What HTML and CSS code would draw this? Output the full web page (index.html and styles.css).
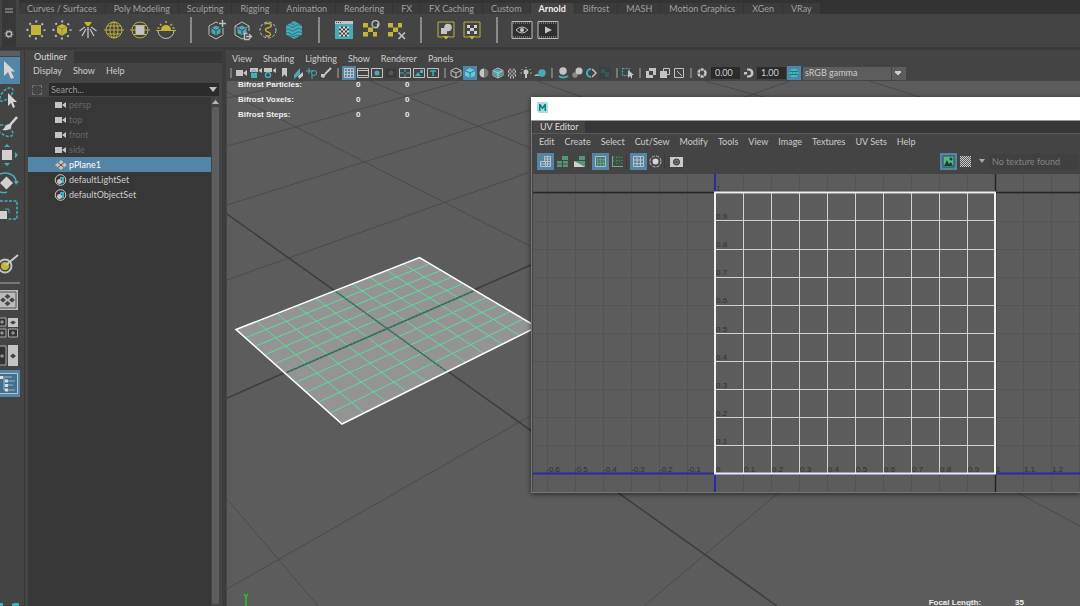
FILE: index.html
```html
<!DOCTYPE html>
<html lang="en">
<head>
<meta charset="utf-8">
<title>Modeling workspace</title>
<link rel="stylesheet" href="styles.css">
</head>
<body>
<div class="app">
  <header class="shelf">
    <div class="shelf-side">
      <button class="plain" aria-label="Shelf tabs"><svg width="8" height="6"><path d="M0 1h8M0 4h8" stroke="#aaa"/></svg></button>
      <button class="plain" aria-label="Shelf options"><svg width="10" height="10"><circle cx="5" cy="5" r="2.6" fill="none" stroke="#b5b5b5" stroke-width="1.5"/><circle cx="5" cy="5" r="4" fill="none" stroke="#b5b5b5" stroke-dasharray="1.2 1.9"/></svg></button>
    </div>
    <div class="shelf-main">
      <div class="shelf-tabs" role="tablist">
        <button role="tab">Curves / Surfaces</button><button role="tab">Poly Modeling</button><button role="tab">Sculpting</button><button role="tab">Rigging</button><button role="tab">Animation</button><button role="tab">Rendering</button><button role="tab">FX</button><button role="tab">FX Caching</button><button role="tab">Custom</button><button role="tab" class="active" aria-selected="true">Arnold</button><button role="tab">Bifrost</button><button role="tab">MASH</button><button role="tab">Motion Graphics</button><button role="tab">XGen</button><button role="tab">VRay</button>
      </div>
      <div class="shelf-tools">
        <button aria-label="Area light"><svg viewBox="0 0 20 20"><circle cx="10" cy="10" r="8.5" class="g dots"/><path d="M5 5h10v10H5z" class="fy"/></svg></button>
        <button aria-label="Mesh light"><svg viewBox="0 0 20 20"><circle cx="10" cy="10" r="8.5" class="g dots"/><path d="M10 4l5 2.500v6L10 16l-5-3.500v-6z" class="fy"/><path d="M5 6.500l5 2.500 5-2.500M10 9v7" stroke="#837a2e" fill="none" stroke-width=".8"/></svg></button>
        <button aria-label="Photometric light"><svg viewBox="0 0 20 20"><path d="M6 2h8l-3 4H9z" class="fy"/><path d="M10 7v11M7 7l-5.500 4M13 7l5.500 4M8 9l-4 7M12 9l4 7" class="g" stroke-width="1.300"/></svg></button>
        <button aria-label="Skydome light"><svg viewBox="0 0 20 20"><circle cx="10" cy="10" r="8" class="y"/><ellipse cx="10" cy="10" rx="4" ry="8" class="y"/><path d="M0 10h20M3 6h14M3 14h14M10 2v16" class="y"/></svg></button>
        <button aria-label="Light portal"><svg viewBox="0 0 20 20"><circle cx="10" cy="10" r="8" class="y"/><path d="M0 10h20M3 5.500h14M3 14.500h14" class="y"/><path d="M5.500 5.500h9v9h-9z" fill="#c4c4c4"/></svg></button>
        <button aria-label="Physical sky"><svg viewBox="0 0 20 20"><path d="M2 10.500a8 8 0 0016 0" class="g"/><path d="M0 10.500h20" class="y"/><path d="M5 10a5 5 0 0110 0z" class="fy"/><path d="M10 1v2M4 4l1.500 1.500M16 4l-1.500 1.500M1.500 8h2M16.500 8h2" class="y" stroke-width="1.500"/></svg></button>
        <i class="sep"></i>
        <button aria-label="Create stand-in"><svg viewBox="0 0 20 20"><path d="M12 3l-2-1-7 4v9l7 4 7-4V8" class="g"/><path d="M10 5.500l4.500 2.500v5L10 15.500 5.500 13V8z" class="ft"/><path d="M5.500 8l4.500 2.500L14.500 8M10 10.500v5M3 15l3-2M17 15l-3-2" stroke="#444" fill="none"/><path d="M16.500 0v7M13 3.500h7" class="g" stroke-width="1.500"/></svg></button>
        <button aria-label="Export stand-in"><svg viewBox="0 0 20 20"><path d="M12 18l-2 1-7-4V6l7-4 7 4v5" class="g"/><path d="M10 5.500l4.500 2.500v5L10 15.500 5.500 13V8z" class="ft"/><path d="M5.500 8l4.500 2.500L14.500 8M10 10.500v5" stroke="#444" fill="none"/><path d="M3 6l4 2.500M17 6l-4 2.500" class="g" stroke-width=".6"/><path d="M15.500 13.500h-3v6h5M14 16.500h5M17 14l2.500 2.500L17 19" class="g" stroke-width="1.300"/></svg></button>
        <button aria-label="Curve collector"><svg viewBox="0 0 20 20"><circle cx="10" cy="10" r="8" class="g" stroke-dasharray="3 1.800"/><path d="M6.500 4c3-1.500 7-.5 7 1.500 0 2.500-6 2-6 4.500s5 1.500 5 4-3 2.500-5 1.500" class="y" stroke-width="1.500"/></svg></button>
        <button aria-label="Volume"><svg viewBox="0 0 20 20"><path d="M10 1l8 4.500v9L10 19l-8-4.500v-9z" class="ft"/><path d="M2 6c4-2 5 3 8 1s4-3 8-1M2 9.500c4-2 5 3 8 1s4-3 8-1M2 13c4-2 5 3 8 1s4-3 8-1M4 16c3-1 4 1.500 6 .5s4-2 6-1M6 3.500c2 0 3 2 5 0" stroke="#2b6f79" fill="none"/></svg></button>
        <i class="sep"></i>
        <button aria-label="Render texture"><svg viewBox="0 0 20 20"><path d="M1 1h18v18H1z" class="ft"/><path d="M1 1h18v3H1z" fill="#c4c4c4"/><path d="M2 2.500h1M4 2.500h1M6 2.500h1" stroke="#444"/><path d="M5 6.500h10v10H5z" fill="#444"/><path d="M5 6.500h2v2H5zM9 6.500h2v2H9zM13 6.500h2v2h-2zM7 8.500h2v2H7zM11 8.500h2v2h-2zM5 10.500h2v2H5zM9 10.500h2v2H9zM13 10.500h2v2h-2zM7 12.500h2v2H7zM11 12.500h2v2h-2zM5 14.500h2v2H5zM9 14.500h2v2H9zM13 14.500h2v2h-2z" fill="#d8d8d8"/></svg></button>
        <button aria-label="Update textures"><svg viewBox="0 0 20 20"><path d="M3 3h5v4.500H3zM8 7.500h5V12H8zM3 12h5v4.500H3zM13 12h4v4.500h-4z" class="fy"/><path d="M13.500 7a3.500 3.500 0 114 0M17.500 3.500v4h-4" class="g" stroke-width="1.300"/></svg></button>
        <button aria-label="Delete textures"><svg viewBox="0 0 20 20"><path d="M2 3h5v4.500H2zM12 3h4v4.500h-4zM7 7.500h5V12H7zM2 12h5v4.500H2z" class="fy"/><path d="M12.500 12.500l6.500 6.500M19 12.500L12.500 19" class="g" stroke-width="1.700"/></svg></button>
        <i class="sep"></i>
        <button aria-label="Bake geometry"><svg viewBox="0 0 20 20"><path d="M7 17H2V2h16v15h-5" class="y"/><path d="M6.500 16h7L10 19.500z" class="fy"/><circle cx="12" cy="7.500" r="3.800" fill="#c4c4c4"/><path d="M5 8h4l2 3v3H5z" fill="#c4c4c4"/></svg></button>
        <button aria-label="Bake texture"><svg viewBox="0 0 20 20"><path d="M7 17H2V2h16v15h-5" class="y"/><path d="M6.500 16h7L10 19.500z" class="fy"/><path d="M5 5h3v3H5zM12 5h3v3h-3zM8 8h4v3H8zM5 11h3v3H5zM12 11h3v3h-3z" fill="#d0d0d0"/></svg></button>
        <i class="sep"></i>
        <button aria-label="Render view"><svg viewBox="0 0 20 20"><path d="M0 1.500h20v17H0z" fill="#303030" stroke="#bbb"/><path d="M1 3h18M1 17h18" stroke="#aaa" stroke-dasharray="1 1"/><path d="M4 10q6-6 12 0q-6 6-12 0z" class="g"/><circle cx="10" cy="10" r="2" fill="#c4c4c4"/></svg></button>
        <button aria-label="Render"><svg viewBox="0 0 20 20"><path d="M0 1.500h20v17H0z" fill="#303030" stroke="#bbb"/><path d="M1 3h18M1 17h18" stroke="#aaa" stroke-dasharray="1 1"/><path d="M7 6.500l7 3.500-7 3.500z" fill="#c4c4c4"/></svg></button>
      </div>
    </div>
  </header>

  <main class="work">
    <nav class="toolbox" aria-label="Tools">
      <i class="grip"></i>
      <button class="on" aria-label="Select"><svg viewBox="0 0 21 27"><path d="M4 4v15l4-4 3 7 3-1.500-3-6h4z" fill="#d5d5d5"/></svg></button>
      <button aria-label="Lasso"><svg viewBox="0 0 21 27"><path d="M0 14C0 6 12-1 13 5c0 6-8 12-13 11" class="t" stroke-dasharray="3 1.500" stroke-width="1.500"/><path d="M8 8v13l3-3 2 5 2-1-2-5h4z" fill="#d5d5d5"/></svg></button>
      <button aria-label="Paint select"><svg viewBox="0 0 21 27"><path d="M0 12c6-1 13 5 13 9-1 4-8 3-13-2" class="t" stroke-dasharray="3 1.500" stroke-width="1.500"/><path d="M17 4l-7 8" stroke="#d5d5d5" stroke-width="2.500"/><path d="M11 11c2 5-3 7-9 6 3-1 3-7 9-6z" fill="#d5d5d5"/></svg></button>
      <button aria-label="Move"><svg viewBox="0 0 21 27"><path d="M2 9h10v10H2z" fill="#d0d0d0"/><path d="M4 6l3-3 3 3zM4 22l3 3 3-3zM15 11l3 3-3 3z" class="ft"/></svg></button>
      <button aria-label="Rotate"><svg viewBox="0 0 21 27"><path d="M0 5c7-3 16 1 16 8M0 23c3 1 5 1 7 0" class="t" stroke-width="1.500"/><path d="M14 12h5l-3 4z" class="ft"/><path d="M6.500 7.500L13 14l-6.500 6.500L0 14z" fill="#d0d0d0"/></svg></button>
      <button aria-label="Scale"><svg viewBox="0 0 21 27"><path d="M0 4h17v18H7" class="t" stroke-dasharray="3 1.500" stroke-width="1.500"/><path d="M0 14h7v8H0z" fill="#d0d0d0"/><path d="M5 12h4v4" class="t"/></svg></button>
      <button class="last-tool" aria-label="Soft modification"><svg viewBox="0 0 21 27"><circle cx="5" cy="15" r="6.500" fill="none" stroke="#c4c4c4" stroke-width="2"/><circle cx="5" cy="15" r="4" class="fy"/><path d="M6 14l12-10" stroke="#c9c9c9" stroke-width="2"/></svg></button>
      <hr>
      <button aria-label="Single view"><svg viewBox="0 0 21 27"><path d="M-2 4h20v20H-2z" fill="#bbb"/><path d="M-1 6h17v16H-1z" fill="none" stroke="#555"/><path d="M7.500 8l3 2.500-3 2.500-3-2.500zM3 11.500L6 14l-3 2.500L0 14zM12 11.500l3 2.500-3 2.500L9 14zM7.500 15l3 2.500-3 2.500-3-2.500z" fill="#444"/></svg></button>
      <button aria-label="Four views"><svg viewBox="0 0 21 27"><path d="M-3 4h9v8h-9zM-3 15h9v8h-9zM8.500 15h9v8h-9z" fill="#333" stroke="#aaa"/><path d="M8 4h10v9H8z" fill="#c4c4c4"/><path d="M0 8h4M2 6v4M0 19h4M2 17v4M11 19h4M13 17v4" stroke="#aaa"/><path d="M10 8.500l3-2 3 2-3 2z" fill="#444"/></svg></button>
      <button aria-label="Two views"><svg viewBox="0 0 21 27"><path d="M-3 4h9v19h-9z" fill="#333" stroke="#aaa"/><path d="M8 3h10v21H8z" fill="#c4c4c4"/><path d="M0 14h4M2 12v4" stroke="#aaa"/><path d="M10 14l3-2.500 3 2.500-3 2.500z" fill="#444"/></svg></button>
      <button class="on" aria-label="Outliner view"><svg viewBox="0 0 21 27"><path d="M-2 3.500h19.500v20H-2z" fill="#416f8e" stroke="#b5c4ce"/><path d="M0 7h12M4 8v12M4 11h11M4 15h9M4 20h11" stroke="#a3b5c2"/><path d="M0 6h3v3H0zM5 9.500h3v3H5zM5 14h3v3H5zM5 18.500h3v3H5z" fill="#ddd"/></svg></button>
      <svg class="brand" width="20" height="3"><path d="M0 0h3v3H0zM12 1l2-1h5v3h-7z" fill="#35b5bb"/></svg>
    </nav>

    <section class="outliner">
      <div class="panel-tabs" role="tablist"><button role="tab" aria-selected="true">Outliner</button></div>
      <div class="menu"><button>Display</button><button>Show</button><button>Help</button></div>
      <div class="search">
        <svg width="12" height="12"><path d="M1.500 4V1.500H4M8 1.500h2.500V4M10.500 8v2.500H8M4 10.500H1.500V8" fill="none" stroke="#777"/><path d="M1.500 5v2M10.500 5v2M5 1.500h2M5 10.500h2" stroke="#5c5c5c"/></svg>
        <label class="search-box"><input type="text" placeholder="Search..." aria-label="Search"><svg width="8" height="5"><path d="M0 0h8L4 5z" fill="#c0c0c0"/></svg></label>
      </div>
      <div class="tree-wrap">
        <ul class="tree">
          <li class="dim"><svg viewBox="0 0 14 12"><path d="M1 3h7v6H1zM8 6l4-3v6z"/></svg>persp</li>
          <li class="dim"><svg viewBox="0 0 14 12"><path d="M1 3h7v6H1zM8 6l4-3v6z"/></svg>top</li>
          <li class="dim"><svg viewBox="0 0 14 12"><path d="M1 3h7v6H1zM8 6l4-3v6z"/></svg>front</li>
          <li class="dim"><svg viewBox="0 0 14 12"><path d="M1 3h7v6H1zM8 6l4-3v6z"/></svg>side</li>
          <li class="selected"><svg viewBox="0 0 14 12"><path d="M7 1l6 5-6 5-6-5z" fill="#c9bfb8"/><path d="M4 3.500l6 5M10 3.500l-6 5" stroke="#555"/></svg>pPlane1</li>
          <li><svg viewBox="0 0 14 12"><circle cx="6.500" cy="6" r="5.300" fill="none" stroke="#ccc"/><circle cx="5.500" cy="7.500" r="2.500"/><path d="M6 3h4v6H8V5H6z" fill="#3bb0ba"/></svg>defaultLightSet</li>
          <li><svg viewBox="0 0 14 12"><circle cx="6.500" cy="6" r="5.300" fill="none" stroke="#ccc"/><circle cx="5.500" cy="7.500" r="2.500"/><path d="M6 3h4v6H8V5H6z" fill="#3bb0ba"/></svg>defaultObjectSet</li>
        </ul>
        <div class="scroll"><svg width="7" height="4"><path d="M0 4h7L3.500 0z" fill="#b5b5b5"/></svg><i></i></div>
      </div>
    </section>

    <section class="view">
      <div class="menu"><button>View</button><button>Shading</button><button>Lighting</button><button>Show</button><button>Renderer</button><button>Panels</button></div>
      <div class="view-tools">
        <i class="bar"></i>
        <button aria-label="Camera"><svg viewBox="0 0 14 14"><path d="M1 4h7v6H1zM8 7l4-3v6z" class="fg"/></svg></button>
        <button aria-label="Lock camera"><svg viewBox="0 0 14 14"><path d="M1 2h8v4H1zM10 4l3-2v5l-3-2z" class="fg"/><path d="M2 7h6v5H2z" class="ft"/><path d="M3 7c0-4 4-4 4 0" class="t"/></svg></button>
        <button aria-label="Camera settings"><svg viewBox="0 0 14 14"><path d="M1 2h8v4H1zM10 4l3-2v5l-3-2z" class="fg"/><circle cx="5" cy="9" r="2.500" fill="#444" stroke="#45adb8" stroke-width="1.500"/></svg></button>
        <button aria-label="Bookmark"><svg viewBox="0 0 14 14"><path d="M5 2h5v9L7.500 8.500 5 11z" class="fg"/></svg></button>
        <button aria-label="Image plane"><svg viewBox="0 0 14 14"><path d="M3 9l6-7v6l-6 5z" class="ft"/><path d="M7 10l5-4v4l-4 3zM2 12l3-2" class="fg"/></svg></button>
        <button aria-label="Pan zoom"><svg viewBox="0 0 14 14"><path d="M1 5h7M4 2v6" class="t"/><circle cx="9" cy="7" r="2.500" class="t" /><path d="M7 9v4" class="t"/></svg></button>
        <button aria-label="Grease pencil"><svg viewBox="0 0 14 14"><path d="M12 2L6 8" stroke="#c4c4c4" stroke-width="2"/><path d="M2 8l5 0-2 4-3-1zM7 12h4" class="fg"/></svg></button>
        <i class="bar"></i>
        <button class="on" aria-label="Grid"><svg viewBox="0 0 14 14"><path d="M2.500 2.500h9v9h-9zM5.500 2.500v9M8.500 2.500v9M2.500 5.500h9M2.500 8.500h9" class="g"/></svg></button>
        <button aria-label="Film gate"><svg viewBox="0 0 14 14"><path d="M1.500 2.500h11v9h-11zM2 4.500h10M2 9.500h10" class="g"/></svg></button>
        <button aria-label="Resolution gate"><svg viewBox="0 0 14 14"><path d="M1.500 2.500h11v9h-11z" class="g"/><circle cx="7" cy="7" r="2.500" class="ft"/></svg></button>
        <button aria-label="Gate mask"><svg viewBox="0 0 14 14"><path d="M1.500 2.500h11v9h-11z" fill="#3a3a3a"/><circle cx="7" cy="7" r="2.500" fill="#555"/></svg></button>
        <button aria-label="Field chart"><svg viewBox="0 0 14 14"><path d="M1.500 2.500h11v9h-11z" class="g"/><path d="M7 3v3M7 8v3M2 7h4M8 7h4" class="t"/></svg></button>
        <button aria-label="Safe action"><svg viewBox="0 0 14 14"><path d="M1.500 2.500h11v9h-11z" class="g"/><path d="M3 10l3-4 3 4zM8 4h3v3H8z" class="ft"/></svg></button>
        <button aria-label="Safe title"><svg viewBox="0 0 14 14"><path d="M1.500 2.500h11v9h-11z" class="g"/><path d="M4 5h6M7 5v5" class="t" stroke-width="1.500"/></svg></button>
        <i class="bar"></i>
        <button aria-label="Wireframe"><svg viewBox="0 0 14 14"><path d="M7 2l5 2.500v5L7 12 2 9.500v-5zM2 4.500L7 7l5-2.500M7 7v5" class="g"/></svg></button>
        <button class="on" aria-label="Shaded"><svg viewBox="0 0 14 14"><path d="M7 2l5 2.500v5L7 12 2 9.500v-5z" fill="#62cfdb"/><path d="M2 4.500L7 7l5-2.500M7 7v5" stroke="#2d7187" fill="none"/></svg></button>
        <button aria-label="Default material"><svg viewBox="0 0 14 14"><path d="M7 2.500a4.500 4.500 0 000 9z" class="fg"/><path d="M7 2.500a4.500 4.500 0 010 9z" fill="#777"/></svg></button>
        <button aria-label="Wireframe on shaded"><svg viewBox="0 0 14 14"><path d="M7 3l4 2v4l-4 2-4-2V5z" class="ft"/><path d="M7 2l5 2.500v5L7 12 2 9.500v-5zM2 4.500L7 7l5-2.500M7 7v5" class="g"/></svg></button>
        <button aria-label="Textured"><svg viewBox="0 0 14 14"><circle cx="7" cy="7" r="4.500" fill="#555"/><path d="M4.500 3.500h1M8.500 3.500h1M3 5.500h1M6.500 5.500h1M10 5.500h1M4.500 7.500h1M8.500 7.500h1M3 9.500h1M6.500 9.500h1M10 9.500h1M5 11.500h1M8 11.500h1" stroke="#ccc" stroke-width="2"/></svg></button>
        <button aria-label="Lights"><svg viewBox="0 0 14 14"><circle cx="7" cy="6" r="2.500" class="fg"/><path d="M6 8h2v4H6z" class="fg"/><path d="M7 1v1M2.500 3l1 1M11.500 3l-1 1M1.500 7h1.500M11 7h1.500" class="g"/></svg></button>
        <button aria-label="Shadows"><svg viewBox="0 0 14 14"><circle cx="9" cy="7" r="3.700" class="ft"/><path d="M1 10q3-4 6 0z" fill="#9fb5b8"/></svg></button>
        <i class="bar"></i>
        <button aria-label="Occlusion"><svg viewBox="0 0 14 14"><circle cx="7" cy="5" r="3.700" class="fg"/><path d="M3 10q4 3 9 0" class="t" stroke-width="2"/></svg></button>
        <button aria-label="Motion blur"><svg viewBox="0 0 14 14"><circle cx="5" cy="9" r="2.700" fill="#888"/><circle cx="9" cy="5" r="3.500" class="fg"/></svg></button>
        <button aria-label="Anti-aliasing"><svg viewBox="0 0 14 14"><path d="M7 3a4 4 0 000 8" class="t" stroke-width="2"/><path d="M8 3l4 4-4 4" class="g" stroke-width="1.500"/></svg></button>
        <button aria-label="Depth of field"><svg viewBox="0 0 14 14"><path d="M1 1h12v12H1z" fill="#3a4142"/><path d="M3 3h4v4H3zM7 6h4v5H7z" fill="#33575a"/></svg></button>
        <i class="bar"></i>
        <button aria-label="Isolate select"><svg viewBox="0 0 14 14"><path d="M1.500 2.500h7v7h-7z" class="t" stroke-dasharray="2 1"/><path d="M7 4v8l2-2 2 3v-4h2z" class="fg"/></svg></button>
        <i class="bar"></i>
        <button aria-label="X-ray"><svg viewBox="0 0 14 14"><path d="M5 2h7v7H5zM2 5h7v7H2z" class="fg"/><path d="M5 5h4v4H5z" fill="#444"/></svg></button>
        <button aria-label="X-ray joints"><svg viewBox="0 0 14 14"><path d="M5.500 2.500h6v6h-6z" fill="none" stroke="#c4c4c4"/><path d="M2 5h7v7H2z" class="fg"/></svg></button>
        <button aria-label="X-ray components"><svg viewBox="0 0 14 14"><path d="M2.500 2.500h9v9h-9zM5 5l5 5" class="g"/></svg></button>
        <i class="bar"></i>
        <button aria-label="Exposure"><svg viewBox="0 0 14 14"><circle cx="7" cy="7" r="3.500" fill="none" stroke="#c4c4c4" stroke-width="2.500" stroke-dasharray="3 .7"/></svg></button>
        <input class="num" aria-label="Exposure value" value="0.00">
        <button aria-label="Gamma"><svg viewBox="0 0 14 14"><path d="M6 2.500h2a4.500 4.500 0 010 9H6V9.500h1.500a2.500 2.500 0 000-5H6zM3 6h3v2.500H3z" class="fg"/></svg></button>
        <input class="num" aria-label="Gamma value" value="1.00">
        <button class="on" aria-label="Color management"><svg viewBox="0 0 14 14"><circle cx="7" cy="7" r="4.500" fill="#3bbcc1"/><path d="M3 5.500h8M3 8.500h8M5 7h1M8 7h1" stroke="#24616e" stroke-width=".8"/></svg></button>
        <select aria-label="View transform"><option>sRGB gamma</option></select>
      </div>
      <div class="stage">
        <svg class="scene" aria-hidden="true">
          <g transform="translate(-227 -81)" fill="none">
            <path stroke="#4b4b4b" d="M227 98L305 81M227 146L458 82M227 205L530 110M227 280L530 172M227 589L530 416M227 92L530 246M370 81L530 148M537 81L582 97M227 499L318 606M644 606L778 493M1018 493L1080 526M705 81L763 97M745 97L790 81M869 81L920 97"/>
            <path stroke="#3d3d3d" stroke-width="1.500" d="M227 214L777 606M227 398L531 265"/>
            <path fill="#949494" d="M236 329.500L419.500 257.500 537 327 342 424z"/>
            <path stroke="#5cdc9e" d="M256.700 321.400L364 413M276.700 313.500L386 402M296.700 305.700L406.700 392M315.700 298.200L426.700 382M352.300 283.900L465.700 362.500M369.700 277.100L483.700 353.500M386.700 270.400L502.300 344.300M403.300 263.900L519.700 335.600M245.700 337.700L429 264M255.700 346L440 270.700M265.700 354.300L451 277.300M275.700 363.300L462 284M296.300 382.300L486 297.700M307.300 391.700L498.300 305M319 402L510 311.700M331 412.700L522.700 319.300"/>
            <path stroke="#2f6b50" stroke-width="1.500" d="M335 291L446.700 371.500M286 372.700L474 290.700"/>
            <path stroke="#39a577" stroke-dasharray="1 3" d="M335 291L446.700 371.500M286 372.700L474 290.700"/>
            <path stroke="#fff" stroke-width="1.500" d="M236 329.500L419.500 257.500 537 327 342 424z"/>
            <path stroke="#22c322" stroke-width="1.500" d="M246 606v-9M244 594l2 3 2-3"/>
          </g>
        </svg>
        <table class="hud">
          <tr><th>Bifrost Particles:</th><td>0</td><td>0</td></tr>
          <tr><th>Bifrost Voxels:</th><td>0</td><td>0</td></tr>
          <tr><th>Bifrost Steps:</th><td>0</td><td>0</td></tr>
        </table>
        <div class="focal"><span>Focal Length:</span><span>35</span></div>
      </div>
    </section>
  </main>

  <section class="uv" aria-label="UV Editor">
    <div class="titlebar"><svg width="11" height="11"><path d="M0 0h10l1 1v10H2L0 9z" fill="#a9dedd"/><path d="M2 9V2h1.500l2 3 2-3H9v7H7.500V5l-2 2.500L3.500 5v4z" fill="#0b7f86"/></svg></div>
    <div class="panel-tabs" role="tablist"><button role="tab" aria-selected="true">UV Editor</button></div>
    <div class="menu"><button>Edit</button><button>Create</button><button>Select</button><button>Cut/Sew</button><button>Modify</button><button>Tools</button><button>View</button><button>Image</button><button>Textures</button><button>UV Sets</button><button>Help</button></div>
    <div class="uv-tools">
      <button class="on" aria-label="Wireframe"><svg viewBox="0 0 17 17"><path d="M3.500 8.500h5v5h-5zM8.500 8.500h5v5h-5zM7.500 3.500h6v5h-6zM10.500 3.500v10M3.500 11h10M7 6h6" class="g"/></svg></button>
      <button aria-label="Shaded"><svg viewBox="0 0 17 17"><path d="M3 8h5v6H3zM9 8h5v6H9zM8 3h6v4H8z" class="fn"/><path d="M3 11h11" stroke="#444" stroke-width=".7"/></svg></button>
      <button aria-label="Distortion"><svg viewBox="0 0 17 17"><path d="M3 8h11v6H3zM8 3h6v4H8z" class="fn"/><path d="M3 8l11 6H3z" fill="#d0d0d0"/></svg></button>
      <i></i>
      <button class="on" aria-label="Texture borders"><svg viewBox="0 0 17 17"><path d="M3.500 3.500h10v10h-10z" fill="#3f8068" stroke="#bbb"/><path d="M5.500 5v8M8.500 5v8M11.500 5v8M5 6.500h8M5 10.500h8" stroke="#7dad9d" stroke-width=".5"/></svg></button>
      <button aria-label="Shell borders"><svg viewBox="0 0 17 17"><path d="M4 4h9v9H4z" fill="#355447"/><path d="M3.500 3v11M3 13.500h11" stroke="#8a9a92"/><path d="M13 4v9M8 4v9M4 8h9M4 4h9" stroke="#6d8579" stroke-dasharray="1 2"/></svg></button>
      <i></i>
      <button class="on" aria-label="Grid"><svg viewBox="0 0 17 17"><path d="M3.500 3.500h10v10h-10zM7 3.500v10M10.500 3.500v10M3.500 7h10M3.500 10.500h10" class="g"/></svg></button>
      <button aria-label="Isolate"><svg viewBox="0 0 17 17"><circle cx="8.500" cy="8.500" r="3" fill="#d5d5d5"/><circle cx="8.500" cy="8.500" r="5.500" class="g" stroke-dasharray="3 1.300"/></svg></button>
      <i></i>
      <button aria-label="Snapshot"><svg viewBox="0 0 17 17"><path d="M2 4h13v10H2z" fill="#c9c9c9"/><circle cx="8.500" cy="9" r="3" fill="#777" stroke="#333"/><circle cx="8.500" cy="9" r="1" fill="#333"/></svg></button>
      <span class="texture">
        <button class="on" aria-label="Display image"><svg viewBox="0 0 17 17"><path d="M3 3h11v11H3z" fill="#56b58a" stroke="#2a4a45"/><path d="M4 13l3-6 2 4 2-2 2 4z" fill="#233b35"/><circle cx="11" cy="6" r="1.500" fill="#233b35"/></svg></button>
        <button aria-label="Checker map"><svg viewBox="0 0 17 17"><path d="M3 3h11v11H3z" fill="#555"/><path d="M3 3.500h11M3 5.500h11M3 7.500h11M3 9.500h11M3 11.500h11M3 13.500h11" stroke="#ccc" stroke-dasharray="1 1"/><path d="M4 4.500h10M4 6.500h10M4 8.500h10M4 10.500h10M4 12.500h10" stroke="#ccc" stroke-dasharray="1 1"/></svg></button>
        <svg width="15" height="5"><path d="M5 0h6L8 4z" fill="#aaa"/></svg>
        <input type="text" aria-label="Texture" value="No texture found" readonly>
      </span>
    </div>
    <svg class="uv-canvas" role="img" aria-label="UV layout">
      <defs><pattern id="cell" x="14" y="19" width="28" height="28" patternUnits="userSpaceOnUse"><path d="M0 .5h28M.5 0v28" stroke="#545454" fill="none"/></pattern></defs>
      <rect width="100%" height="100%" fill="url(#cell)"/>
      <path d="M0 18.500h2000M462.500 0v400" stroke="#252525" stroke-width="1.500"/>
      <path d="M0 299.500h2000M182 0v400" stroke="#2b2ba6" stroke-width="2"/>
      <g class="uv-labels">
        <text x="13" y="298">-0.6</text><text x="41" y="298">-0.5</text><text x="70" y="298">-0.4</text><text x="98" y="298">-0.3</text><text x="126" y="298">-0.2</text><text x="154" y="298">-0.1</text><text x="183" y="298">0</text><text x="211" y="298">0.1</text><text x="239" y="298">0.2</text><text x="267" y="298">0.3</text><text x="295" y="298">0.4</text><text x="323" y="298">0.5</text><text x="351" y="298">0.6</text><text x="379" y="298">0.7</text><text x="407" y="298">0.8</text><text x="435" y="298">0.9</text><text x="463" y="298">1</text><text x="491" y="298">1.1</text><text x="519" y="298">1.2</text>
        <text x="183" y="270">0.1</text><text x="183" y="242">0.2</text><text x="183" y="214">0.3</text><text x="183" y="186">0.4</text><text x="183" y="158">0.5</text><text x="183" y="129">0.6</text><text x="183" y="101">0.7</text><text x="183" y="73">0.8</text><text x="183" y="45">0.9</text><text x="183" y="17">1</text>
      </g>
      <path d="M210.500 19v280M238.500 19v280M266.500 19v280M294.500 19v280M322.500 19v280M350.500 19v280M378.500 19v280M406.500 19v280M434.500 19v280M182 46.500h280M182 75.500h280M182 103.500h280M182 131.500h280M182 159.500h280M182 187.500h280M182 215.500h280M182 243.500h280M182 271.500h280" stroke="#d2d2d2"/>
      <path d="M182 18.500h280v281h-280z" fill="none" stroke="#f0f0f0" stroke-width="2"/>
    </svg>
  </section>
</div>
</body>
</html>
```
FILE: styles.css
```css
* { box-sizing: border-box; }

html, body { height: 100%; margin: 0; }

body {
  background: #444;
  color: #ccc;
  font: 9px/12px Lato, "Open Sans", sans-serif;
  overflow: hidden;
}

button, input, select { font: inherit; color: inherit; }

button {
  display: flex;
  align-items: center;
  justify-content: center;
  padding: 0;
  border: 0;
  background: none;
  white-space: nowrap;
}

svg { display: block; flex: none; }

.g { fill: none; stroke: #c0c0c0; }
.y { fill: none; stroke: #bcae3e; }
.t { fill: none; stroke: #45adb8; }
.fg { fill: #c4c4c4; }
.fy { fill: #c4b53a; }
.ft { fill: #45adb8; }
.fn { fill: #569676; }
.dots { stroke-width: 2; stroke-dasharray: 2 4.675; stroke-dashoffset: 1; }
.on { background: #5285a6; }

.app {
  position: relative;
  display: flex;
  flex-direction: column;
  height: 100%;
  min-height: 606px;
  overflow: hidden;
}

/* Shelf */
.shelf {
  display: flex;
  gap: 3px;
  height: 50px;
  padding-left: 2px;
  border-bottom: 3px solid #3a3a3a;
}

.shelf-side {
  display: flex;
  flex-direction: column;
  justify-content: space-between;
  align-items: center;
  width: 14px;
  padding: 8px 0;
  background: #373737;
}

.shelf-main { flex: 1; min-width: 0; }

.shelf-tabs {
  display: flex;
  gap: 1px;
  height: 14px;
  padding-top: 3px;
  background: #333;
}

.shelf-tabs button { padding: 0 8px; background: #3b3b3b; color: #a0a0a0; }
.shelf-tabs .active { background: #444; color: #eee; font-weight: bold; }

.shelf-tools { display: flex; height: 31px; padding-left: 4px; align-items: center; }
.shelf-tools button { width: 26px; }
.shelf-tools svg { width: 20px; height: 20px; overflow: visible; }
.sep { width: 24px; height: 26px; background: linear-gradient(#8a8a8a, #8a8a8a) center / 2px 100% no-repeat; }

/* Workspace */
.work { display: flex; flex: 1; min-height: 0; }

.toolbox {
  display: flex;
  flex-direction: column;
  width: 25px;
  padding-right: 4px;
  border-right: 1px solid #383838;
}

.toolbox button { height: 27px; margin-bottom: 1px; }
.toolbox button svg { width: 21px; height: 27px; }
.toolbox .last-tool { margin-top: 26px; }
.grip { height: 5px; margin: 1px 0; background: radial-gradient(#777 1px, transparent 1px) 0 0 / 2px 2px; opacity: 0.5; }
.toolbox hr { width: 100%; height: 2px; margin: 3px 0 2px; border: 0; background: #777; }
.brand { margin-top: auto; }

.menu { display: flex; gap: 11px; height: 15px; }

.panel-tabs { display: flex; height: 12px; background: #373737; }
.panel-tabs button { padding: 0 7px; background: #444; color: #ddd; }

.outliner {
  display: flex;
  flex-direction: column;
  width: 199px;
  margin-left: 2px;
  padding-top: 1px;
  border-right: 4px solid #3c3c3c;
}

.outliner .menu { padding-left: 6px; margin-bottom: 5px; }

.search { display: flex; gap: 6px; padding: 0 3px 0 4px; align-items: center; }

.search-box {
  display: flex;
  flex: 1;
  align-items: center;
  height: 13px;
  padding-right: 2px;
  background: #2b2b2b;
}

.search-box input {
  flex: 1;
  min-width: 0;
  height: 13px;
  padding: 0 2px;
  border: 0;
  background: none;
}

.search-box input::placeholder { color: #999; }

.tree-wrap { display: flex; flex: 1; margin: 1px 2px 0 1px; }

.tree { flex: 1; margin: 0; padding: 0; list-style: none; background: #373737; }
.tree li { display: flex; align-items: center; gap: 1px; height: 15px; padding-left: 26px; }
.tree svg { width: 14px; height: 12px; fill: #c4c4c4; }
.tree .dim { color: #676767; }
.tree .selected { background: #5285a6; color: #fff; }

.scroll { display: flex; flex-direction: column; align-items: center; gap: 3px; width: 9px; padding: 3px 0 2px; }
.scroll i { flex: 1; width: 7px; border-radius: 2px; background: #5d5d5d; }

/* Perspective view */
.view { display: flex; flex-direction: column; flex: 1; min-width: 0; padding-top: 1px; }
.view .menu { padding-left: 6px; }

.view-tools { display: flex; align-items: center; height: 14px; margin-bottom: 1px; }
.view-tools button { flex: none; width: 14px; height: 14px; }
.view-tools button svg { width: 14px; height: 14px; }
.bar { flex: none; width: 9px; height: 10px; background: linear-gradient(#777, #777) center / 2px 100% no-repeat; }

.num { width: 29px; height: 12px; margin: 0 1px 0 2px; padding: 0 4px; border: 0; background: #2b2b2b; }

.view-tools select {
  width: 103px;
  height: 13px;
  margin-left: 2px;
  padding: 0 2px;
  border: 0;
  appearance: none;
  background: conic-gradient(from -37deg at 50% 100%, #ccc 74deg, transparent 0) right 4px center / 8px 5px no-repeat, linear-gradient(#444, #444) right 14px top / 1px 100% no-repeat, #5d5d5d;
}

.stage { position: relative; flex: 1; margin-left: 1px; background: #5c5c5c; overflow: hidden; }
.scene { width: 100%; height: 100%; }

.hud {
  position: absolute;
  top: -4px;
  left: 11px;
  border-collapse: collapse;
  color: #eee;
  font: bold 8px/15px "Liberation Sans", Arial, sans-serif;
  text-align: left;
}

.hud th { width: 118px; padding: 0; }
.hud td { width: 49px; padding: 0; }

.focal {
  position: absolute;
  right: 56px;
  bottom: -4px;
  display: flex;
  gap: 34px;
  color: #eee;
  font: bold 8px/14px "Liberation Sans", Arial, sans-serif;
}

/* UV editor window */
.uv {
  position: absolute;
  top: 97px;
  left: 531px;
  right: 0;
  border-bottom: 1px solid #777;
  border-left: 1px solid #777;
  background: #444;
  box-shadow: 0 1px 5px rgba(0, 0, 0, 0.6);
}

.titlebar { display: flex; align-items: center; height: 24px; padding: 0 6px 2px; background: #fff; border-bottom: 1px solid #999; margin-left: -1px; }
.uv .panel-tabs { height: 13px; padding-left: 1px; border-bottom: 1px solid #5a5a5a; }
.uv .menu { gap: 10px; padding-left: 7px; }
.uv-tools { display: flex; align-items: center; height: 25px; padding-left: 5px; }
.uv-tools i { width: 4px; height: 15px; border-left: 1px solid #3a3a3a; }
.uv-tools button { width: 17px; height: 17px; }
.uv-tools button svg { width: 17px; height: 17px; }

.texture { display: flex; align-items: center; margin: 0 1px 0 auto; }

.texture input {
  width: 90px;
  height: 15px;
  padding: 0 3px;
  border: 0;
  background: #404040;
  color: #858585;
}

.uv-canvas { width: calc(100% - 1px); height: 318px; margin-left: 1px; background: #5c5c5c; }
.uv-labels { fill: #303030; font: 8px "Liberation Sans", Arial, sans-serif; }
```
